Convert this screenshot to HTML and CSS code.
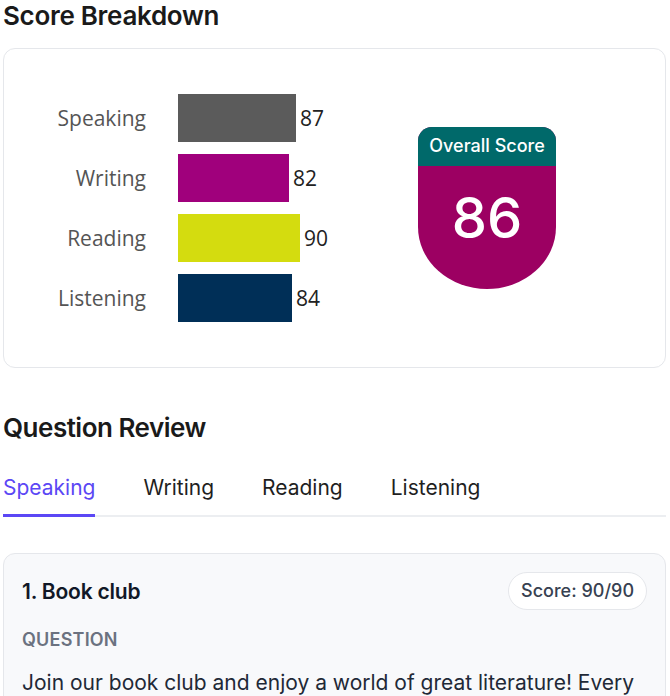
FILE: index.html
```html
<!DOCTYPE html>
<html>
<head>
  <link rel="stylesheet" href="styles.css">
</head>
<body>
  <div class="page">
    <h2 class="section-title">Score Breakdown</h2>
    <div class="breakdown-card">
      <div class="chart">
        <span class="chart-label">Speaking</span>
        <div class="chart-row">
          <div class="bar bar-speaking" style="width: 118px;"></div>
          <span class="bar-value">87</span>
        </div>
        <span class="chart-label">Writing</span>
        <div class="chart-row">
          <div class="bar bar-writing" style="width: 111px;"></div>
          <span class="bar-value">82</span>
        </div>
        <span class="chart-label">Reading</span>
        <div class="chart-row">
          <div class="bar bar-reading" style="width: 122px;"></div>
          <span class="bar-value">90</span>
        </div>
        <span class="chart-label">Listening</span>
        <div class="chart-row">
          <div class="bar bar-listening" style="width: 114px;"></div>
          <span class="bar-value">84</span>
        </div>
      </div>
      <div class="overall">
        <div class="overall-head">Overall Score</div>
        <div class="overall-body">86</div>
      </div>
    </div>

    <h2 class="section-title review-title">Question Review</h2>
    <div class="tabs">
      <span class="tab active">Speaking</span>
      <span class="tab">Writing</span>
      <span class="tab">Reading</span>
      <span class="tab">Listening</span>
    </div>

    <div class="question-card">
      <div class="question-head">
        <span class="question-title">1. Book club</span>
        <span class="score-pill">Score: 90/90</span>
      </div>
      <div class="question-label">Question</div>
      <p class="question-text">Join our book club and enjoy a world of great literature! Every month we pick a new title, meet up to talk it through and share our favourite passages over coffee.</p>
    </div>
  </div>
</body>
</html>
```

FILE: styles.css
```css
body {
  margin: 0;
  padding: 0;
  background-color: #fff;
  font-family: Inter, "Noto Sans", sans-serif;
  color: #111827;
}

.page {
  padding: 0 4px 0 3px;
}

.section-title {
  margin: 0;
  font-size: 26px;
  line-height: 32px;
  font-weight: 600;
  letter-spacing: -0.3px;
  color: #1a1a1a;
}

.breakdown-card {
  margin-top: 16px;
  height: 320px;
  box-sizing: border-box;
  border: 1px solid #e5e7eb;
  border-radius: 12px;
  display: flex;
  align-items: center;
}

.chart {
  display: grid;
  grid-template-columns: 142px 170px;
  column-gap: 32px;
  row-gap: 12px;
  align-items: center;
}

.chart-label {
  text-align: right;
  font-family: "Open Sans", sans-serif;
  font-size: 21px;
  color: #555;
}

.chart-row {
  display: flex;
  align-items: center;
}

.bar {
  height: 48px;
}

.bar-speaking { background-color: #5b5b5b; }
.bar-writing { background-color: #a0007c; }
.bar-reading { background-color: #d4dc0f; }
.bar-listening { background-color: #002f57; }

.bar-value {
  margin-left: 4px;
  font-family: "Open Sans", sans-serif;
  font-size: 21px;
  color: #222;
}

/* shield-shaped badge: square-ish top, round bottom */
.overall {
  margin-left: 70px;
  width: 138px;
  height: 162px;
  border-radius: 14px 14px 69px 69px / 14px 14px 62px 62px;
  overflow: hidden;
  display: flex;
  flex-direction: column;
  background-color: #9c0062;
  color: #fff;
}

.overall-head {
  height: 39px;
  line-height: 38px;
  background-color: #00696a;
  text-align: center;
  font-size: 18px;
  font-weight: 500;
}

.overall-body {
  flex: 1;
  text-align: center;
  font-size: 56px;
  font-weight: 500;
  line-height: 104px;
  padding-bottom: 19px;
}

.review-title {
  margin-top: 44px;
  letter-spacing: -0.5px;
}

.tabs {
  margin-top: 30px;
  display: flex;
  gap: 48px;
  border-bottom: 2px solid #eceef1;
}

.tab {
  font-size: 21px;
  line-height: 28px;
  padding-bottom: 14px;
  margin-bottom: -2px;
  color: #1f1f1f;
}

.tab.active {
  color: #5b47f5;
  border-bottom: 3px solid #5b47f5;
  padding-bottom: 12px;
}

.question-card {
  margin-top: 36px;
  border: 1px solid #e5e7eb;
  border-radius: 12px;
  background-color: #f8f9fb;
  padding: 18px 18px 0 18px;
}

.question-head {
  display: flex;
  justify-content: space-between;
  align-items: center;
}

.question-title {
  font-size: 21px;
  font-weight: 600;
  letter-spacing: -0.2px;
  color: #111827;
}

.score-pill {
  background-color: #fff;
  border: 1px solid #e5e7eb;
  border-radius: 999px;
  padding: 7px 12px;
  font-size: 18px;
  line-height: 22px;
  font-weight: 500;
  color: #374151;
}

.question-label {
  margin-top: 19px;
  font-size: 18px;
  font-weight: 600;
  text-transform: uppercase;
  letter-spacing: 0.2px;
  color: #6b7280;
}

.question-text {
  margin: 16px 0 0 0;
  font-size: 21px;
  line-height: 34px;
  color: #1f2937;
}
```
